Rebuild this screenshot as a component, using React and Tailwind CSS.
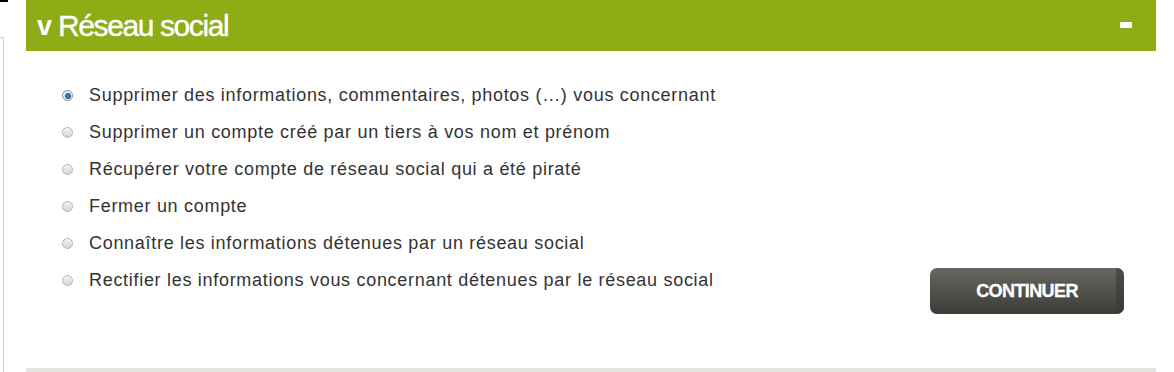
import React, { useState } from "react";

const options = [
  "Supprimer des informations, commentaires, photos (…) vous concernant",
  "Supprimer un compte créé par un tiers à vos nom et prénom",
  "Récupérer votre compte de réseau social qui a été piraté",
  "Fermer un compte",
  "Connaître les informations détenues par un réseau social",
  "Rectifier les informations vous concernant détenues par le réseau social",
];

function Radio({ checked }) {
  return (
    <span
      className={`flex items-center justify-center w-[11px] h-[11px] rounded-full border ${
        checked ? "border-[#8a8a8a] bg-[#e9eef2]" : "border-[#b4b4b4] bg-gradient-to-b from-[#f4f4f4] to-[#d6d6d6]"
      }`}
    >
      {checked && (
        <span className="w-[6px] h-[6px] rounded-full bg-[#2f86c8] border border-[#1d4f7a]"></span>
      )}
    </span>
  );
}

export default function App() {
  const [selected, setSelected] = useState(0);
  return (
    <div className="flex w-[1174px] h-[372px] bg-white font-['Liberation_Sans',Arial,sans-serif] overflow-hidden">
      <div className="w-[26px] flex flex-col">
        <div className="w-[8px] h-[2px] bg-black"></div>
        <div className="mt-[35px] w-[4px] flex-1 border-t border-r border-[#cfcfcf]"></div>
      </div>
      <div className="w-[1130px] flex flex-col">
        <div className="h-[51px] bg-[#8dac15] flex items-center justify-between pl-[11px] pr-[24px]">
          <div className="flex items-center text-white">
            <span className="text-[27px] font-bold leading-none mt-[2px] tracking-[-1px]">v</span>
            <span className="ml-[7px] text-[30px] leading-none mt-[1px] tracking-[-1.4px] [-webkit-text-stroke:0.4px_white]">
              Réseau social
            </span>
          </div>
          <span className="w-[12px] h-[6px] rounded-[1px] bg-white mt-[-2px]"></span>
        </div>
        <div className="flex items-end justify-between pt-[26px] pl-[36px] pr-[32px]">
          <ul className="flex flex-col pb-[15px]">
            {options.map((label, i) => (
              <li
                key={i}
                onClick={() => setSelected(i)}
                className="h-[37px] flex items-center gap-[16px] cursor-pointer text-[18px] tracking-[0.7px] text-[#333333]"
              >
                <Radio checked={selected === i} />
                <span>{label}</span>
              </li>
            ))}
          </ul>
          <button className="relative w-[194px] h-[46px] rounded-[7px] bg-gradient-to-b from-[#67665f] to-[#3d3c38] text-white text-[18px] font-bold tracking-[-0.6px] [-webkit-text-stroke:0.3px_white] overflow-hidden">
            <span className="absolute right-0 top-0 bottom-0 w-[8px] bg-[#3a3935]/60"></span>
            CONTINUER
          </button>
        </div>
        <div className="flex-1"></div>
        <div className="h-[4px] bg-[#e5e5e0]"></div>
      </div>
    </div>
  );
}
